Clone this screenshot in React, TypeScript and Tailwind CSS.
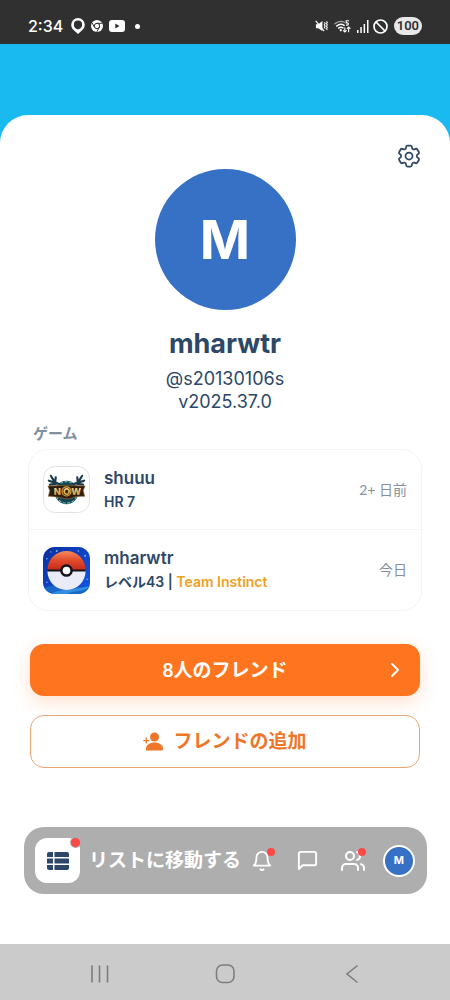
import type { ReactNode } from 'react';
import { FiBell, FiMessageSquare, FiUsers } from 'react-icons/fi';
import { HiOutlineCog6Tooth } from 'react-icons/hi2';

interface Game {
  name: string;
  level: string;
  team?: string;
  lastSeen: string;
  icon: ReactNode;
}

const GAMES: Game[] = [
  { name: 'shuuu', level: 'HR 7', lastSeen: '2+ 日前', icon: <HunterIcon /> },
  { name: 'mharwtr', level: 'レベル43', team: 'Team Instinct', lastSeen: '今日', icon: <BallIcon /> },
];

export default function App() {
  return (
    <div className="flex min-h-screen flex-col bg-[#18baf0] font-['Inter','Noto_Sans_CJK_JP',sans-serif] text-[#2d4767]">
      <StatusBar />

      <main className="mt-[71px] flex flex-1 flex-col rounded-t-[28px] bg-white pt-[27px]">
        <div className="flex h-[27px] justify-end px-[27px]">
          <button aria-label="Settings" className="flex h-7 w-7 items-center justify-center">
            <HiOutlineCog6Tooth className="h-7 w-7" />
          </button>
        </div>

        <section className="flex flex-col items-center">
          <div className="flex h-[141px] w-[141px] items-center justify-center rounded-full bg-[#3671c6] text-[54px] leading-none font-bold text-white">
            M
          </div>
          <h1 className="mt-4 text-[27px] leading-9 font-bold">mharwtr</h1>
          <p className="mt-[5px] text-lg leading-[23px]">@s20130106s</p>
          <p className="text-lg leading-[23px]">v2025.37.0</p>
        </section>

        <section className="mt-2 px-7">
          <h2 className="px-[5px] font-['Lato','Noto_Sans_CJK_JP',sans-serif] text-[15px] leading-6 font-bold text-[#8390a1]">
            ゲーム
          </h2>
          <ul className="mt-1 divide-y divide-[#f3f4f5] rounded-[20px] border border-[#f3f4f5]">
            {GAMES.map(game => (
              <GameRow key={game.name} game={game} />
            ))}
          </ul>
        </section>

        <section className="mt-[33px] flex flex-col gap-[19px] px-[30px] font-['Lato','Noto_Sans_CJK_JP',sans-serif] text-[19px] font-bold">
          <button className="grid h-[52px] grid-cols-[1fr_auto_1fr] items-center rounded-[14px] bg-[#ff751f] px-5 text-white shadow-[0_6px_18px_rgba(255,117,31,0.22)]">
            <span className="col-start-2">8人のフレンド</span>
            <svg className="h-4 w-[10px] justify-self-end" viewBox="0 0 10 16" fill="none" stroke="currentColor" strokeWidth="2" strokeLinecap="round" strokeLinejoin="round">
              <path d="M2 2l6 6-6 6" />
            </svg>
          </button>
          <button className="flex h-[53px] items-center justify-center gap-2.5 rounded-[14px] border border-[#eda470] bg-white text-[#ee7629]">
            <AddFriendIcon />
            フレンドの追加
          </button>
        </section>

        <BottomBar />
      </main>

      <SystemNav />
    </div>
  );
}

function GameRow({ game }: { game: Game }) {
  return (
    <li className="flex h-20 items-center gap-3.5 px-3.5">
      {game.icon}
      <div className="min-w-0 flex-1">
        <p className="text-[17px] leading-6 font-semibold">{game.name}</p>
        <p className="text-sm leading-6 font-semibold">
          {game.level}
          {game.team && (
            <>
              {' | '}
              <span className="text-[#efa021]">{game.team}</span>
            </>
          )}
        </p>
      </div>
      <span className="font-['Lato','Noto_Sans_CJK_JP',sans-serif] text-sm text-[#8490a0]">{game.lastSeen}</span>
    </li>
  );
}

function StatusBar() {
  return (
    <header className="flex h-11 items-center justify-between bg-[#303030] px-7 pt-2 text-white">
      <div className="flex items-center gap-1.5">
        <span className="text-base leading-5 font-medium">2:34</span>
        <svg className="ml-0.5 h-4 w-[14px]" viewBox="0 0 14 16">
          <path fill="currentColor" fillRule="evenodd" d="M7 0a6.8 6.8 0 0 1 6.8 6.8c0 3-1.7 4.600-3.500 6.200L7 16l-3.300-3C1.900 11.400.2 9.800.2 6.800A6.800 6.800 0 0 1 7 0zm0 2.600A4.100 4.100 0 0 0 2.900 6.700c0 2.200 1.800 4.500 4.100 4.500s4.100-2.300 4.100-4.500A4.100 4.100 0 0 0 7 2.600z" />
        </svg>
        <svg className="h-3 w-3" viewBox="0 0 12 12">
          <circle cx="6" cy="6" r="6" fill="currentColor" />
          <circle cx="6" cy="6" r="2.700" fill="currentColor" stroke="#303030" strokeWidth="1" />
          <path d="M6 3.300h5.400M3.700 7.400L1 2.800M8.300 7.400L5.800 11.800" stroke="#303030" strokeWidth="1" />
        </svg>
        <svg className="h-3 w-4" viewBox="0 0 16 12">
          <rect width="16" height="12" rx="3" fill="currentColor" />
          <path d="M6.300 3.600v4.800L10.500 6z" fill="#303030" />
        </svg>
        <span className="ml-1 h-[5px] w-[5px] rounded-full bg-white" />
      </div>

      <div className="flex items-center gap-1.5">
        <svg className="h-[14px] w-[13px]" viewBox="0 0 14 14" fill="none" stroke="currentColor">
          <path d="M1 5h2.500L8 1.500v11L3.500 9.500H1z" fill="currentColor" stroke="none" />
          <path d="M.8 1.500l9 11" strokeWidth="1.300" />
          <path d="M10 3l1 1.300-1 1.300 1 1.400-1 1.300 1 1.400M12.300 2l1 1.300-1 1.300 1 1.400-1 1.300 1 1.300-1 1.300 1 1.300" strokeWidth="1.100" />
        </svg>
        <svg className="h-[14px] w-[17px]" viewBox="0 0 18 14" fill="none" stroke="currentColor" strokeLinecap="round">
          <path d="M1 4.600C4.300 1.800 7.800 1.400 11 3" strokeWidth="1.400" opacity=".6" />
          <path d="M2.800 7.100c2.300-2 5.500-2.300 8-.7M4.900 9.300c1.400-1.100 3.200-1.200 4.700-.3" strokeWidth="1.500" />
          <circle cx="7.200" cy="11.500" r="1.200" fill="currentColor" stroke="none" />
          <path d="M15.500 1.500h-2.600v2.200c2.900-.5 3.300 2.400.3 2.400" strokeWidth="1.200" />
          <path d="M11.500 9v4.300M10 11.800l1.500 1.500 1.500-1.500M15.500 13V8M14 9.500L15.500 8 17 9.500" strokeWidth="1.200" />
        </svg>
        <svg className="h-[13px] w-3" viewBox="0 0 12 13" fill="currentColor">
          <path d="M0 10h1.500v3H0zM3.300 7h1.500v6H3.300zM6.600 4h1.500v9H6.600zM10 0h1.500v13H10z" />
        </svg>
        <svg className="-ml-0.5 h-[15px] w-[15px]" viewBox="0 0 15 15" fill="none" stroke="currentColor" strokeWidth="1.700">
          <circle cx="7.500" cy="7.500" r="6.500" />
          <path d="M3 3l9 9" />
        </svg>
        <span className="rounded-full bg-[#e8e8e8] px-[3px] font-['Roboto',sans-serif] text-[13px] leading-[18px] font-semibold text-[#303030]">
          100
        </span>
      </div>
    </header>
  );
}

function BottomBar() {
  return (
    <nav className="mt-auto mr-[23px] mb-[50px] ml-6 flex h-[67px] items-center rounded-[20px] bg-[#aeaeae] pr-3 pl-[11px] text-white">
      <button className="flex items-center gap-[9px] font-['Lato','Noto_Sans_CJK_JP',sans-serif] text-[19px] font-bold whitespace-nowrap">
        <span className="relative flex h-[45px] w-[45px] items-center justify-center rounded-xl bg-white">
          <svg className="h-[18px] w-[22px]" viewBox="0 0 22 18" fill="#2d4767">
            <path d="M2 0h4v5H0V2a2 2 0 0 1 2-2zM7.500 0H20a2 2 0 0 1 2 2v3H7.500zM0 6.500h6v5H0zM7.500 6.500H22v5H7.500zM0 13h6v5H2a2 2 0 0 1-2-2zM7.500 13H22v3a2 2 0 0 1-2 2H7.500z" />
          </svg>
          <span className="absolute -top-px -right-px h-[11px] w-[11px] rounded-full border border-[#aeaeae] bg-[#fb4a45]" />
        </span>
        リストに移動する
      </button>
      <div className="flex flex-1 items-center justify-between pl-[5px]">
        <BarButton label="Notifications" dot>
          <FiBell className="h-[22px] w-[22px]" />
        </BarButton>
        <BarButton label="Messages">
          <FiMessageSquare className="h-[23px] w-[23px]" />
        </BarButton>
        <BarButton label="Friends" dot>
          <FiUsers className="h-6 w-6" />
        </BarButton>
        <button
          aria-label="Profile"
          className="flex h-8 w-8 items-center justify-center rounded-full border-2 border-white bg-[#3671c6] text-[11px] font-bold"
        >
          M
        </button>
      </div>
    </nav>
  );
}

function BarButton({ label, dot, children }: { label: string; dot?: boolean; children: ReactNode }) {
  return (
    <button aria-label={label} className="relative flex h-6 w-8 items-center justify-center">
      {children}
      {dot && <span className="absolute -top-px right-[3px] h-2 w-2 rounded-full bg-[#fb4a45]" />}
    </button>
  );
}

function SystemNav() {
  return (
    <footer className="flex h-14 items-center justify-around bg-[#cbcbcb] px-9 pt-[3px] text-[#7d7d7d]">
      <button aria-label="Recent apps">
        <svg className="h-5 w-5" viewBox="0 0 20 20" fill="none" stroke="currentColor" strokeWidth="1.600">
          <path d="M3 1.500v17M10.500 1.500v17M18.500 1.500v17" />
        </svg>
      </button>
      <button aria-label="Home">
        <svg className="h-5 w-5" viewBox="0 0 20 20" fill="none" stroke="currentColor" strokeWidth="1.600">
          <rect x="1.500" y="1" width="17.500" height="17.500" rx="6" />
        </svg>
      </button>
      <button aria-label="Back">
        <svg className="h-5 w-5" viewBox="0 0 20 20" fill="none" stroke="currentColor" strokeWidth="1.600">
          <path d="M16.500 1.500L6 10l10.500 8.500" />
        </svg>
      </button>
    </footer>
  );
}

function AddFriendIcon() {
  return (
    <svg className="h-5 w-5" viewBox="0 0 20 20" fill="currentColor">
      <circle cx="11.500" cy="5" r="4.500" />
      <path d="M3 18.500v-2c0-3.500 4-6 8.500-6s8.500 2.500 8.500 6v.5c0 1-.6 1.500-1.500 1.500z" />
      <path d="M2.600 5.600h1.300v2.300h2.300v1.300H3.900v2.300H2.600V9.200H.3V7.900h2.300z" />
    </svg>
  );
}

// Antlered crest with a banner across it
function HunterIcon() {
  return (
    <svg className="h-[47px] w-[47px] shrink-0" viewBox="0 0 48 48">
      <defs>
        <linearGradient id="gold" x1="0" y1="0" x2="0" y2="1">
          <stop offset="0" stopColor="#ffe596" />
          <stop offset="1" stopColor="#d08c2c" />
        </linearGradient>
      </defs>
      <rect x=".5" y=".5" width="47" height="47" rx="12" fill="#fff" stroke="#dfe2e5" />
      <circle cx="24" cy="27" r="12" fill="#174452" />
      <circle cx="24" cy="27" r="11" fill="none" stroke="#63b8b4" strokeWidth="1.200" strokeDasharray="3 1.500" />
      <g fill="none" stroke="#1c3b4b" strokeWidth="2.200" strokeLinecap="round" strokeLinejoin="round">
        <path d="M18 19l-6-2.500L8 10M12.500 16.500l.5-5M12 17l-6-2M14 18l-7 1" />
        <path d="M30 19l6-2.500L40 10M35.500 16.500l-.5-5M36 17l6-2M34 18l7 1" />
      </g>
      <path d="M5 20.500q19-1.500 38 0l-2 4.500 1.500 6q-9-.5-12.500 1.500t-12 0T5.500 31L7 25z" fill="#2d1e11" stroke="#8a642c" strokeWidth=".7" />
      <g fontFamily="Inter" fontWeight="800" fontSize="9.500" fill="url(#gold)" textAnchor="middle">
        <text x="14.500" y="29.500">N</text>
        <text x="24" y="29.500">O</text>
        <text x="34" y="29.500">W</text>
      </g>
      <circle cx="24" cy="26" r="4.600" fill="none" stroke="#e0ab45" strokeWidth="1.200" />
    </svg>
  );
}

function BallIcon() {
  return (
    <svg className="h-[47px] w-[47px] shrink-0" viewBox="0 0 48 48">
      <defs>
        <linearGradient id="sky" x1="0" y1="0" x2="1" y2="1">
          <stop offset="0" stopColor="#0b2f9c" />
          <stop offset="1" stopColor="#1556e8" />
        </linearGradient>
        <linearGradient id="red" x1="0" y1="0" x2="0" y2="1">
          <stop offset="0" stopColor="#f58a5e" />
          <stop offset=".5" stopColor="#e24a2c" />
          <stop offset="1" stopColor="#c62a1b" />
        </linearGradient>
        <clipPath id="tile">
          <rect width="48" height="48" rx="12" />
        </clipPath>
      </defs>
      <g clipPath="url(#tile)">
        <rect width="48" height="48" fill="url(#sky)" />
        <path d="M0 42q12-5 24-2t24-1v9H0z" fill="#1b66c9" />
        <path d="M8 48q4-3 14-4t26-4q-4 4-12 5t-12 3z" fill="#2f8fe0" />
        <g fill="#79b9ff">
          <circle cx="4" cy="12" r=".8" />
          <circle cx="8" cy="5" r=".7" />
          <circle cx="14" cy="4" r="1" />
          <circle cx="36" cy="4" r=".8" />
          <circle cx="43" cy="9" r="1" />
          <circle cx="4" cy="36" r=".8" />
          <circle cx="45" cy="33" r=".8" />
        </g>
        <path d="M4.500 23.500a19.500 19.500 0 0 1 39 0z" fill="url(#red)" />
        <path d="M4.500 24.500a19.500 19.500 0 0 0 39 0z" fill="#e9ecf8" />
        <path d="M4.500 24h39" stroke="#16141c" strokeWidth="2" />
        <circle cx="24" cy="24" r="5.200" fill="#fff" stroke="#16141c" strokeWidth="2.600" />
      </g>
    </svg>
  );
}
